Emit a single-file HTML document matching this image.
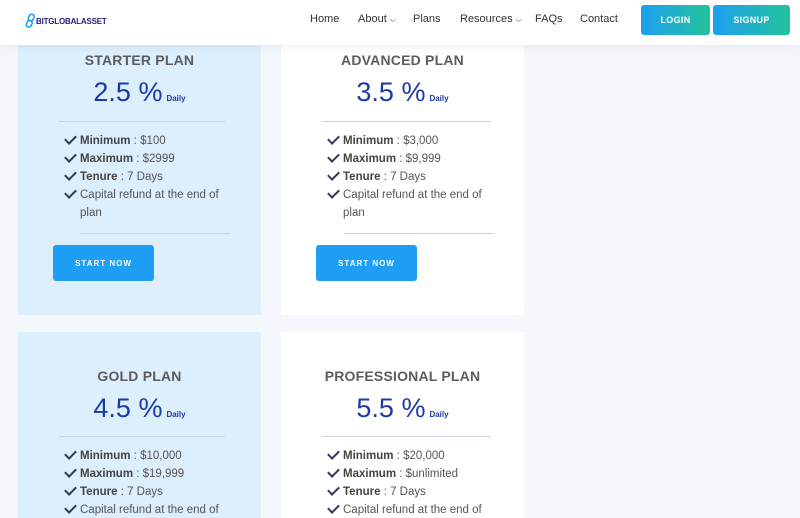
<!DOCTYPE html>
<html><head><style>
*{margin:0;padding:0;box-sizing:border-box}
html,body{width:800px;height:518px;overflow:hidden}
body{background:#f4f7fb;font-family:"Liberation Sans",Arial,sans-serif;position:relative}
.hdr{position:absolute;left:0;top:0;width:800px;height:45px;background:#fff;box-shadow:0 2px 8px rgba(0,0,0,.06);z-index:5}
.logo{position:absolute;left:25px;top:13px;display:flex;align-items:center;font-size:8px;font-weight:bold;color:#2a1a7a;letter-spacing:-.2px}
.nav{position:absolute;top:13px;font-size:11px;color:#333}
.btn{position:absolute;top:5px;height:30px;border-radius:3px;background:linear-gradient(90deg,#1ea0f0,#22c39a);color:#fff;font-size:9px;font-weight:bold;display:flex;align-items:center;justify-content:center;letter-spacing:.3px}
.card{position:absolute;width:243px;background:#fff;overflow:hidden}
.blue{background:#ddeefd}
.t{position:absolute;width:100%;text-align:center;font-size:14px;color:#5c5c5c;font-weight:bold;letter-spacing:.2px}
.p{position:absolute;width:100%;text-align:center;color:#1a3aa8;font-size:27px}
.p small{font-size:8px;font-weight:bold;margin-left:4px}
.hr{position:absolute;height:1px;background:#c9d6e2}
ul{position:absolute;list-style:none;font-size:11.5px;color:#555;line-height:18px}
li{position:relative;padding-left:16px}
li:before{content:"";position:absolute;left:1px;top:3px;width:9px;height:5px;border-left:2.5px solid #333a55;border-bottom:2.5px solid #333a55;transform:rotate(-45deg)}
li b{color:#444}
.sn{position:absolute;width:101px;height:36px;background:#1e9ff5;border-radius:3px;color:#fff;font-size:8px;font-weight:bold;letter-spacing:1px;display:flex;align-items:center;justify-content:center}
</style></head><body>
<div class="hdr">
<div class="logo"><svg width="11" height="16" viewBox="0 0 11 16"><g fill="none" stroke="#1e9ff5" stroke-width="1.6"><rect x="4" y="1" width="5" height="7" rx="2.5" transform="rotate(25 6 4)"/><rect x="2" y="7" width="5" height="7" rx="2.5" transform="rotate(25 4 10)"/></g></svg>BITGLOBALASSET</div>
<div class="nav" style="left:310px">Home</div>
<div class="nav" style="left:358px">About <span style="font-size:8px">⌵</span></div>
<div class="nav" style="left:413px">Plans</div>
<div class="nav" style="left:460px">Resources <span style="font-size:8px">⌵</span></div>
<div class="nav" style="left:535px">FAQs</div>
<div class="nav" style="left:580px">Contact</div>
<div class="btn" style="left:641px;width:69px">LOGIN</div>
<div class="btn" style="left:713px;width:77px">SIGNUP</div>
</div>

<div class="card blue" style="left:18px;top:30px;height:285px">
<div class="t" style="top:22px">STARTER PLAN</div>
<div class="p" style="top:47px">2.5 %<small>Daily</small></div>
<div class="hr" style="left:41px;width:166px;top:91px"></div>
<ul style="left:46px;top:102px;width:160px"><li><b>Minimum</b> : $100</li><li><b>Maximum</b> : $2999</li><li><b>Tenure</b> : 7 Days</li><li>Capital refund at the end of plan</li></ul>
<div class="hr" style="left:62px;width:150px;top:203px"></div>
<div class="sn" style="left:35px;top:215px">START NOW</div>
</div>

<div class="card" style="left:281px;top:30px;height:285px">
<div class="t" style="top:22px">ADVANCED PLAN</div>
<div class="p" style="top:47px">3.5 %<small>Daily</small></div>
<div class="hr" style="left:41px;width:169px;top:91px"></div>
<ul style="left:46px;top:102px;width:160px"><li><b>Minimum</b> : $3,000</li><li><b>Maximum</b> : $9,999</li><li><b>Tenure</b> : 7 Days</li><li>Capital refund at the end of plan</li></ul>
<div class="hr" style="left:63px;width:150px;top:203px"></div>
<div class="sn" style="left:35px;top:215px">START NOW</div>
</div>

<div class="card blue" style="left:18px;top:332px;height:186px">
<div class="t" style="top:36px">GOLD PLAN</div>
<div class="p" style="top:61px">4.5 %<small>Daily</small></div>
<div class="hr" style="left:41px;width:166px;top:104px"></div>
<ul style="left:46px;top:115px;width:160px"><li><b>Minimum</b> : $10,000</li><li><b>Maximum</b> : $19,999</li><li><b>Tenure</b> : 7 Days</li><li>Capital refund at the end of plan</li></ul>
</div>

<div class="card" style="left:281px;top:332px;height:186px">
<div class="t" style="top:36px">PROFESSIONAL PLAN</div>
<div class="p" style="top:61px">5.5 %<small>Daily</small></div>
<div class="hr" style="left:41px;width:169px;top:104px"></div>
<ul style="left:46px;top:115px;width:160px"><li><b>Minimum</b> : $20,000</li><li><b>Maximum</b> : $unlimited</li><li><b>Tenure</b> : 7 Days</li><li>Capital refund at the end of plan</li></ul>
</div>
</body></html>
